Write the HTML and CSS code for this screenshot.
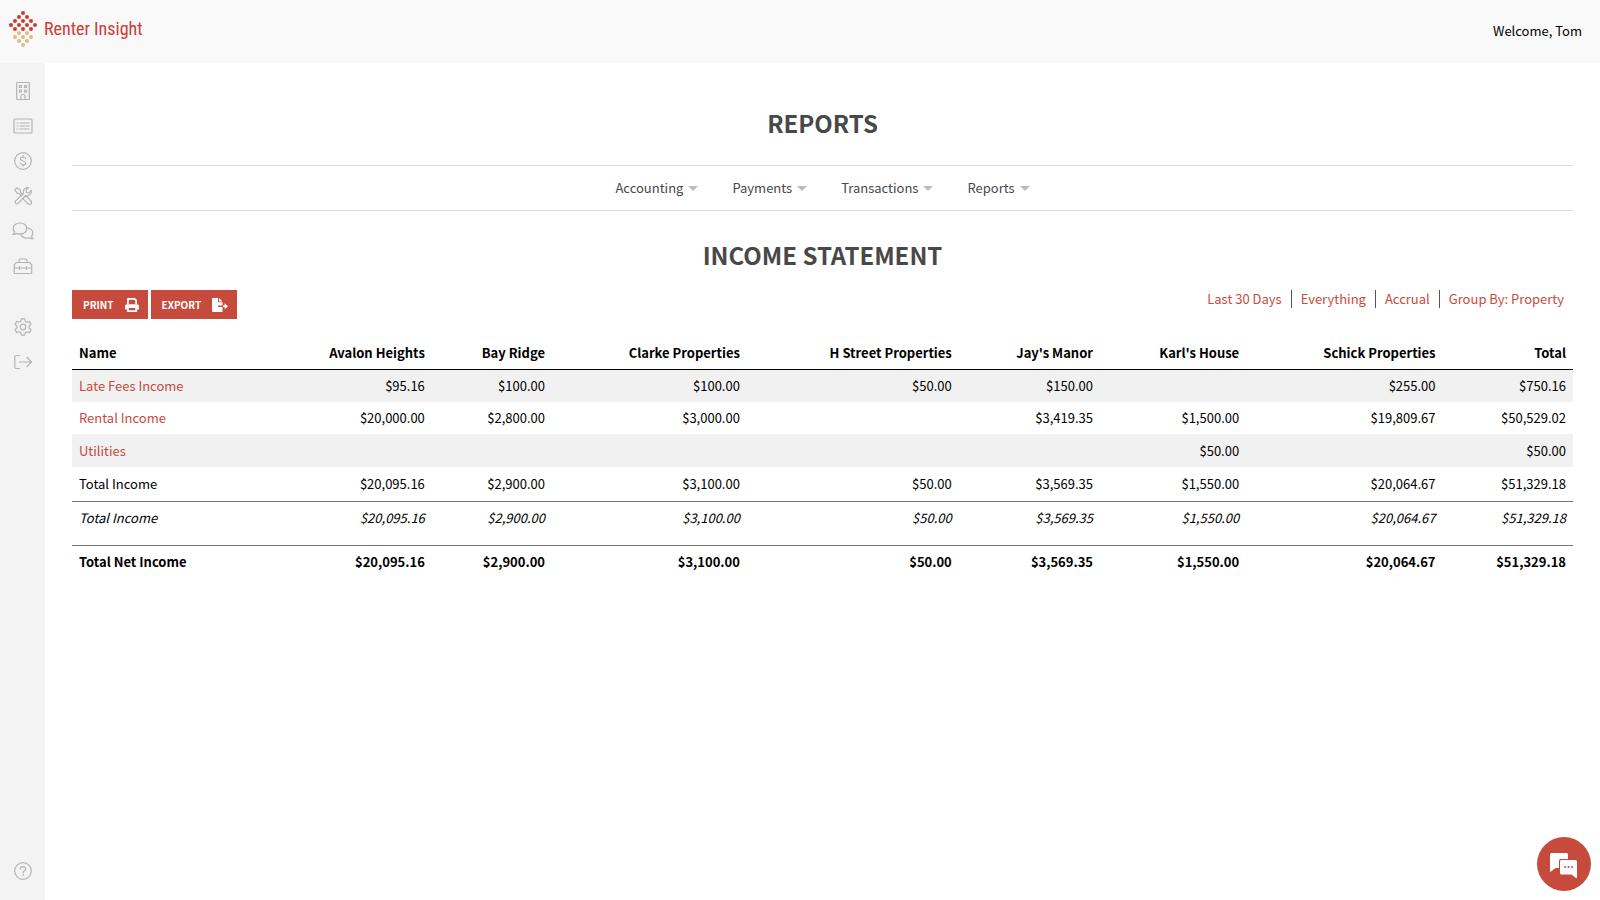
FILE: index.html
```html
<!DOCTYPE html>
<html lang="en">
<head>
    <meta charset="UTF-8">
    <meta name="viewport" content="width=device-width, initial-scale=1.0">
    <title>Income Statement - Renter Insight</title>
    <link rel="stylesheet" href="styles.css">
</head>
<body>
    <header class="topbar">
        <a class="logo" href="#">
            <svg width="30" height="38" viewBox="0 0 30 38" aria-hidden="true">
                <g fill="#cf3a31">
                    <circle cx="15" cy="3" r="2"/>
                    <circle cx="11" cy="7" r="2"/><circle cx="19" cy="7" r="2"/>
                    <circle cx="7" cy="11" r="2"/><circle cx="15" cy="11" r="2"/><circle cx="23" cy="11" r="2"/>
                    <circle cx="3" cy="15" r="2"/><circle cx="11" cy="15" r="2"/><circle cx="19" cy="15" r="2"/><circle cx="27" cy="15" r="2"/>
                    <circle cx="7" cy="19" r="2"/><circle cx="15" cy="19" r="2"/><circle cx="23" cy="19" r="2"/>
                </g>
                <g fill="#e3b88a">
                    <circle cx="11" cy="23" r="2"/><circle cx="19" cy="23" r="2"/>
                    <circle cx="7" cy="27" r="2"/><circle cx="15" cy="27" r="2"/><circle cx="23" cy="27" r="2"/>
                    <circle cx="11" cy="31" r="2"/><circle cx="19" cy="31" r="2"/>
                    <circle cx="15" cy="35" r="2"/>
                </g>
            </svg>
            <span>Renter Insight</span>
        </a>
        <div class="welcome">Welcome, Tom</div>
    </header>

    <div class="layout">
        <nav class="sidebar" aria-label="Main">
            <a href="#" aria-label="Properties">
                <svg viewBox="0 0 20 20"><path d="M4.500 1.500h11a.8.8 0 0 1 .8.8v15.400a.8.8 0 0 1-.8.8h-11a.8.8 0 0 1-.8-.8V2.300a.8.8 0 0 1 .8-.8zM8 18.500v-3a2 2 0 0 1 4 0v3"/><path d="M6.500 4.500h2v2h-2zM11.500 4.500h2v2h-2zM6.500 9h2v2h-2zM11.500 9h2v2h-2z"/></svg>
            </a>
            <a href="#" aria-label="Leases">
                <svg viewBox="0 0 20 20"><rect x="1" y="3" width="18" height="14" rx="1"/><path d="M7 7h9M7 10h9M7 13h9M4 7h1M4 10h1M4 13h1"/></svg>
            </a>
            <a href="#" aria-label="Accounting">
                <svg viewBox="0 0 20 20"><circle cx="10" cy="10" r="8.300"/><path d="M12.700 7.600C12.300 6.600 11.300 6.100 10 6.100c-1.500 0-2.600.7-2.600 1.900 0 2.700 5.300 1.300 5.300 4 0 1.200-1.200 1.900-2.700 1.900-1.400 0-2.500-.6-2.800-1.700M10 4.700v1.400M10 13.900v1.400"/></svg>
            </a>
            <a href="#" aria-label="Maintenance">
                <svg viewBox="0 0 20 20"><path d="M1.800 3.800l2-2 3.400 2.300.3 2L9.800 8.400 8.400 9.800 6.100 7.500l-2-.3zM11.700 10.300l1.500-.2 4.800 4.900a1.900 1.900 0 0 1-2.900 2.900l-4.800-4.800.2-1.500"/><path d="M18.300 4.500a4.300 4.300 0 0 1-5.600 5L4.900 17.600a1.800 1.800 0 0 1-2.500-2.500l8.100-7.800a4.300 4.300 0 0 1 5-5.600l-2.400 2.400.4 2.400 2.400.4z"/></svg>
            </a>
            <a href="#" aria-label="Messages">
                <svg class="wide" viewBox="0 0 22 20"><path d="M8 2c3.900 0 6.800 2.400 6.800 5.500S11.900 13 8 13c-1.200 0-2.300-.2-3.300-.6-1 .7-2.200 1.100-3.700 1.100.8-.8 1.400-1.700 1.600-2.600C1.700 10 1.200 8.800 1.200 7.500 1.200 4.400 4.100 2 8 2z"/><path d="M14.700 6.800c3.500.1 6.100 2.300 6.100 5.200 0 1.300-.5 2.400-1.300 3.300.2.900.7 1.800 1.500 2.500-1.400 0-2.600-.4-3.500-1.100-3.700 1.200-7.900-.3-9.100-3.700"/></svg>
            </a>
            <a href="#" aria-label="Toolbox">
                <svg viewBox="0 0 20 20"><path d="M3.500 6.500h13l2.200 2.200v8a.8.8 0 0 1-.8.800H2.100a.8.800 0 0 1-.8-.8v-8zM6 6.500V4a1 1 0 0 1 1-1h6a1 1 0 0 1 1 1v2.500M1.300 12h17.400M6.500 10.500v3M13.500 10.500v3"/></svg>
            </a>
            <a class="group-start" href="#" aria-label="Settings">
                <svg viewBox="0 0 20 20"><circle cx="10" cy="10" r="2.800"/><path d="M8.300 1.800h3.400l.5 2.400 1.700 1 2.400-.8 1.700 3-1.900 1.600v2l1.900 1.600-1.700 3-2.400-.8-1.700 1-.5 2.400H8.300l-.5-2.400-1.700-1-2.400.8-1.700-3L3.900 11V9L2 7.400l1.700-3 2.400.8 1.700-1z"/></svg>
            </a>
            <a href="#" aria-label="Log out">
                <svg viewBox="0 0 20 20"><path d="M6.500 3.500H3a1.200 1.200 0 0 0-1.200 1.200v10.600A1.200 1.200 0 0 0 3 16.500h3.500M6.500 10h12M14 5.500l4.500 4.500-4.500 4.500"/></svg>
            </a>
            <a class="help" href="#" aria-label="Help">
                <svg viewBox="0 0 20 20"><circle cx="10" cy="10" r="8.300"/><path d="M7.300 8c.1-1.500 1.200-2.400 2.700-2.400s2.700.9 2.700 2.200c0 1.900-2.600 1.900-2.600 3.900M10.100 13.400v1.200"/></svg>
            </a>
        </nav>

        <main class="content">
            <h1>Reports</h1>

            <nav class="menu" aria-label="Reports">
                <button type="button">Accounting</button>
                <button type="button">Payments</button>
                <button type="button">Transactions</button>
                <button type="button">Reports</button>
            </nav>

            <h2>Income Statement</h2>

            <div class="toolbar">
                <div class="actions">
                    <button type="button" class="btn">Print
                        <svg width="14" height="14" viewBox="0 0 14 14" aria-hidden="true"><path fill="#fff" fill-rule="evenodd" d="M3 0h7l2 2v4h-1.800V2.600L9.300 1.800H3.800V6H2V1a1 1 0 0 1 1-1zM2 6.200h10a2 2 0 0 1 2 2V11a.6.6 0 0 1-.6.6H12v1.800a.6.6 0 0 1-.6.600H2.600a.6.600 0 0 1-.6-.6v-1.800H.6A.6.6 0 0 1 0 11V8.200a2 2 0 0 1 2-2zM3.800 10v2.300h6.400V10z"/></svg>
                    </button>
                    <button type="button" class="btn">Export
                        <svg width="16" height="14" viewBox="0 0 16 14" aria-hidden="true"><path fill="#fff" d="M.8 0H6v3.600a.7.700 0 0 0 .7.700h3.800v3.200H6v1.600h4.500v4.100a.8.800 0 0 1-.8.800H.8a.8.800 0 0 1-.8-.8V.8A.8.800 0 0 1 .8 0zM7 0l3.500 3.400H7zM11 7.500h1.600V5.300L16 8.300l-3.400 3V9.100H11z"/></svg>
                    </button>
                </div>
                <div class="filters">
                    <a href="#">Last 30 Days</a>
                    <a href="#">Everything</a>
                    <a href="#">Accrual</a>
                    <a href="#">Group By: Property</a>
                </div>
            </div>

            <table class="statement">
                <thead>
                    <tr>
                        <th>Name</th>
                        <th>Avalon Heights</th>
                        <th>Bay Ridge</th>
                        <th>Clarke Properties</th>
                        <th>H Street Properties</th>
                        <th>Jay's Manor</th>
                        <th>Karl's House</th>
                        <th>Schick Properties</th>
                        <th>Total</th>
                    </tr>
                </thead>
                <tbody>
                    <tr class="striped">
                        <td><a href="#">Late Fees Income</a></td>
                        <td>$95.16</td>
                        <td>$100.00</td>
                        <td>$100.00</td>
                        <td>$50.00</td>
                        <td>$150.00</td>
                        <td></td>
                        <td>$255.00</td>
                        <td>$750.16</td>
                    </tr>
                    <tr>
                        <td><a href="#">Rental Income</a></td>
                        <td>$20,000.00</td>
                        <td>$2,800.00</td>
                        <td>$3,000.00</td>
                        <td></td>
                        <td>$3,419.35</td>
                        <td>$1,500.00</td>
                        <td>$19,809.67</td>
                        <td>$50,529.02</td>
                    </tr>
                    <tr class="striped">
                        <td><a href="#">Utilities</a></td>
                        <td></td>
                        <td></td>
                        <td></td>
                        <td></td>
                        <td></td>
                        <td>$50.00</td>
                        <td></td>
                        <td>$50.00</td>
                    </tr>
                    <tr class="total">
                        <td>Total Income</td>
                        <td>$20,095.16</td>
                        <td>$2,900.00</td>
                        <td>$3,100.00</td>
                        <td>$50.00</td>
                        <td>$3,569.35</td>
                        <td>$1,550.00</td>
                        <td>$20,064.67</td>
                        <td>$51,329.18</td>
                    </tr>
                    <tr class="subtotal">
                        <td>Total Income</td>
                        <td>$20,095.16</td>
                        <td>$2,900.00</td>
                        <td>$3,100.00</td>
                        <td>$50.00</td>
                        <td>$3,569.35</td>
                        <td>$1,550.00</td>
                        <td>$20,064.67</td>
                        <td>$51,329.18</td>
                    </tr>
                </tbody>
                <tfoot>
                    <tr class="net">
                        <td>Total Net Income</td>
                        <td>$20,095.16</td>
                        <td>$2,900.00</td>
                        <td>$3,100.00</td>
                        <td>$50.00</td>
                        <td>$3,569.35</td>
                        <td>$1,550.00</td>
                        <td>$20,064.67</td>
                        <td>$51,329.18</td>
                    </tr>
                </tfoot>
            </table>
        </main>
    </div>

    <button type="button" class="chat" aria-label="Open chat">
        <svg width="28" height="26" viewBox="0 0 28 26" aria-hidden="true">
            <path fill="#fff" d="M1.500 0h15A1.500 1.500 0 0 1 18 1.500V6h-7.500A1.500 1.500 0 0 0 9 7.500V15H5.500L1 18.500a.6.6 0 0 1-1-.5V1.500A1.500 1.500 0 0 1 1.500 0z"/>
            <path fill="#fff" d="M11.500 7h14A1.500 1.500 0 0 1 27 8.500V24.500a.6.6 0 0 1-1 .5l-4.500-3.500h-10A1.500 1.500 0 0 1 10 20V8.500A1.500 1.500 0 0 1 11.500 7z"/>
            <g fill="#c74b3c"><circle cx="15" cy="14" r="1"/><circle cx="18.500" cy="14" r="1"/><circle cx="22" cy="14" r="1"/></g>
        </svg>
    </button>
</body>
</html>
```

FILE: styles.css
```css
* {
    box-sizing: border-box;
}
body {
    margin: 0;
    min-height: 100vh;
    display: flex;
    flex-direction: column;
    font-family: "Noto Sans CJK SC", "Open Sans", sans-serif;
    font-size: 13px;
    line-height: 20px;
    color: #000;
    background: #fff;
}
a {
    color: #c74b3c;
    text-decoration: none;
}
button {
    font: inherit;
    border: none;
    cursor: pointer;
}

/* header */
.topbar {
    height: 63px;
    display: flex;
    align-items: center;
    justify-content: space-between;
    padding: 0 18px 1px 8px;
    background: #f9f9f9;
}
.logo {
    display: flex;
    align-items: center;
    gap: 6px;
    padding-bottom: 4px;
    font-family: "Roboto Condensed", Roboto, sans-serif;
    font-size: 18px;
    color: #cf3a31;
}
.logo svg {
    display: block;
}

/* sidebar */
.layout {
    flex: 1;
    display: flex;
}
.sidebar {
    width: 45px;
    display: flex;
    flex-direction: column;
    padding: 10px 0 12px;
    background: #f3f3f3;
}
.sidebar a {
    height: 35px;
    display: flex;
    align-items: center;
    justify-content: center;
}
.sidebar svg {
    width: 20px;
    height: 20px;
    fill: none;
    stroke: #b4b4b4;
    stroke-width: 1.2;
    stroke-linecap: round;
    stroke-linejoin: round;
}
.sidebar .wide {
    width: 22px;
}
.sidebar .group-start {
    margin-top: 26px;
}
.sidebar .help {
    margin-top: auto;
}

/* page */
.content {
    flex: 1;
    min-width: 0;
    padding: 41px 27px;
}
h1,
h2 {
    margin: 0;
    font-size: 24px;
    line-height: 38px;
    text-align: center;
    text-transform: uppercase;
    color: #484848;
}
.menu {
    display: flex;
    justify-content: center;
    gap: 34px;
    margin: 23px 0 25px;
    padding: 12px 0;
    border-top: 1px solid #ddd;
    border-bottom: 1px solid #ddd;
}
.menu button {
    display: flex;
    align-items: center;
    gap: 5px;
    padding: 0;
    background: none;
    color: #484848;
}
.menu button::after {
    content: "";
    border: 5px solid transparent;
    border-top-color: #bbb;
    border-bottom: none;
}

.toolbar {
    display: flex;
    justify-content: space-between;
    align-items: flex-start;
    margin: 16px 0;
}
.actions {
    display: flex;
    gap: 3px;
}
.btn {
    display: flex;
    align-items: center;
    gap: 11px;
    height: 29px;
    padding: 0 9px 0 11px;
    background: #c74b3c;
    color: #fff;
    font-size: 10px;
    font-weight: bold;
    text-transform: uppercase;
}
.filters {
    display: flex;
}
.filters a {
    padding: 0 9px;
    line-height: 18px;
}
.filters a + a {
    border-left: 1px solid #555;
}

/* statement */
.statement {
    width: 100%;
    border-collapse: collapse;
}
.statement th,
.statement td {
    height: 32px;
    padding: 6px 7px;
    text-align: right;
    white-space: nowrap;
}
.statement th:first-child,
.statement td:first-child {
    text-align: left;
}
.statement thead tr {
    border-bottom: 1px solid #000;
}
.statement th {
    height: 34px;
    padding: 8px 7px 5px;
}
.statement .striped {
    background: #f1f1f1;
}
.statement .striped td {
    height: 33px;
}
.statement .total td {
    height: 34px;
}
.statement .subtotal {
    border-top: 1px solid #777;
    font-style: italic;
}
.statement .subtotal td {
    padding-bottom: 17px;
}
.statement .net {
    border-top: 1px solid #777;
    font-weight: bold;
}

.chat {
    position: fixed;
    right: 9px;
    bottom: 9px;
    width: 54px;
    height: 54px;
    padding: 3px 0 0;
    display: flex;
    align-items: center;
    justify-content: center;
    border-radius: 50%;
    background: #c74b3c;
}
```
